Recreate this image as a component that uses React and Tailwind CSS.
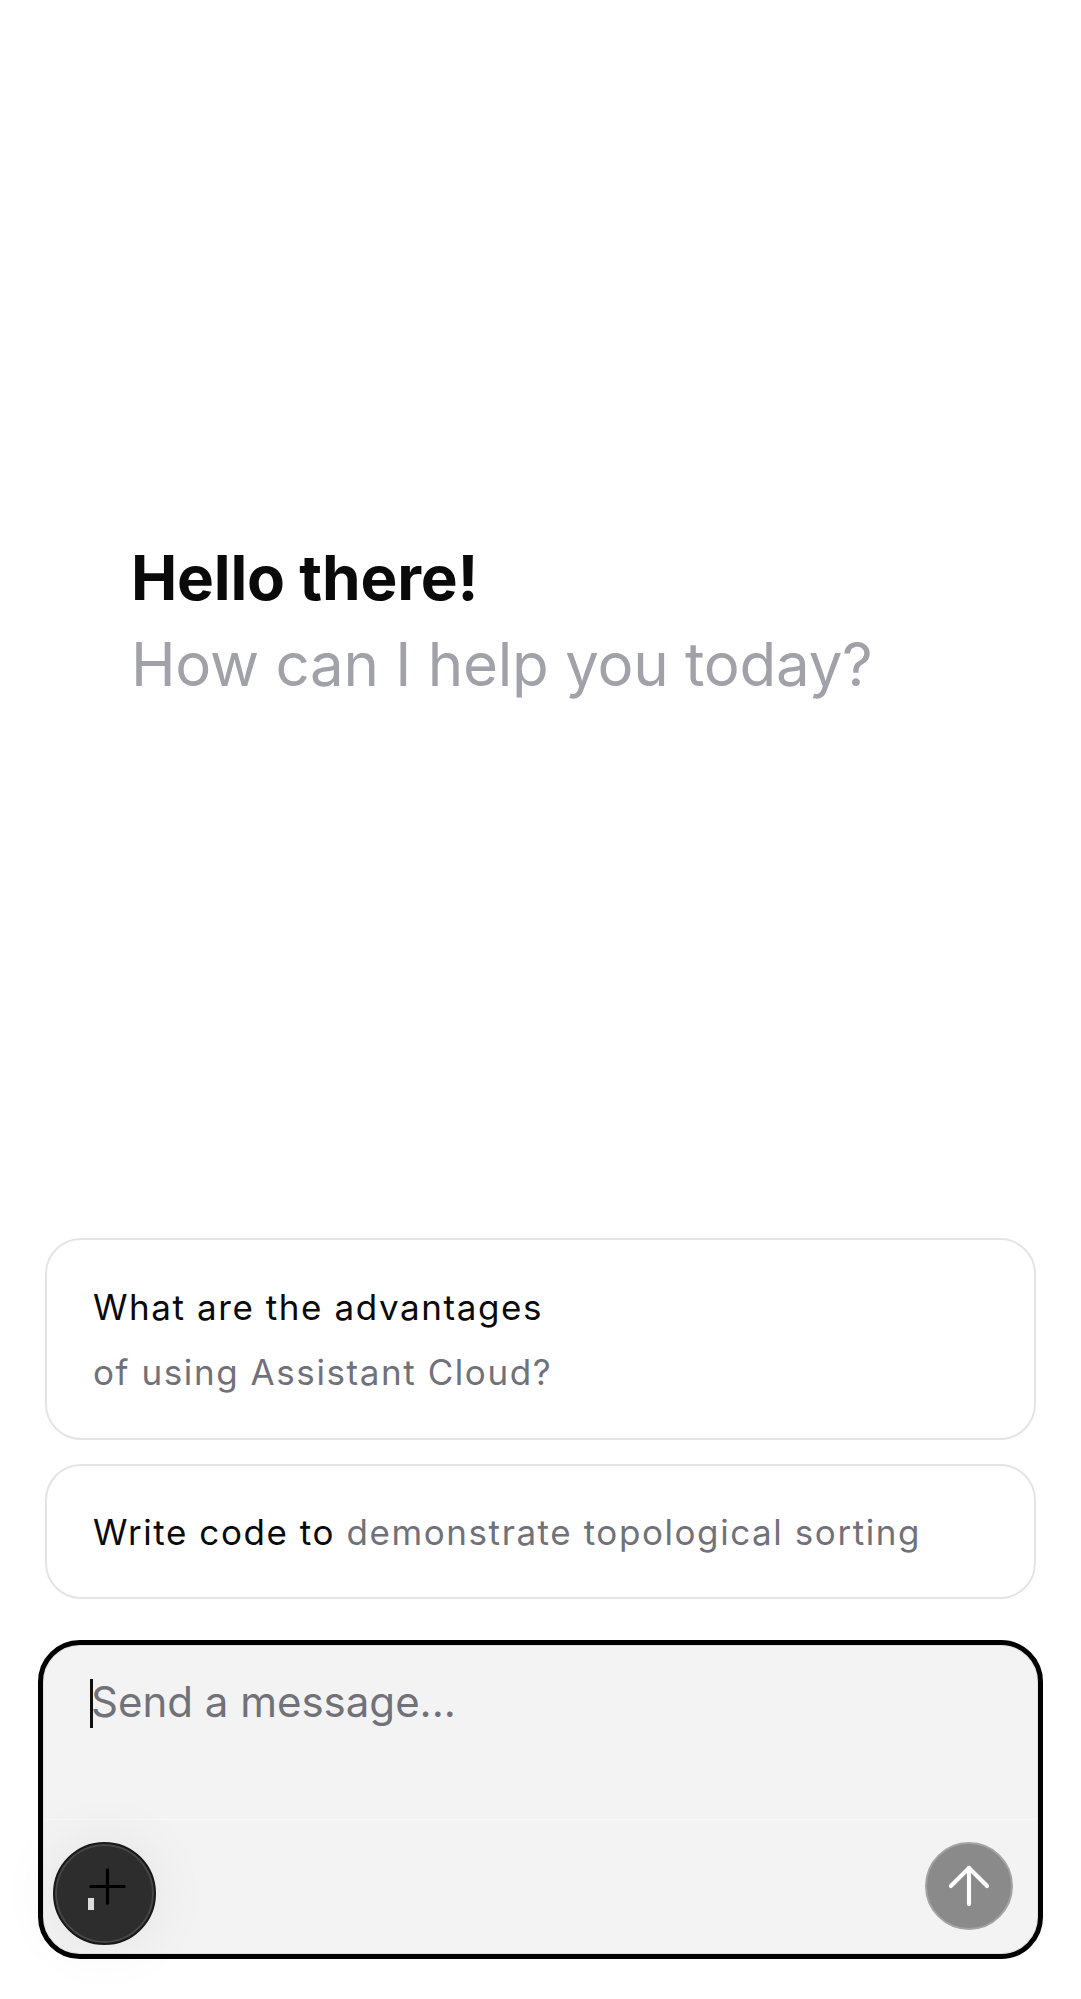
export default function App() {
  return (
    <div
      className="flex h-[1999px] w-full flex-col bg-white"
      style={{ fontFamily: "Inter, 'Noto Sans', sans-serif" }}
    >
      <div className="pl-[131px] pt-[535px]">
        <div className="text-[62px] leading-[86px] font-bold tracking-[-0.2px] text-[#0a0a0a]">
          Hello there!
        </div>
        <div className="text-[60px] leading-[86px] font-normal tracking-[-0.25px] text-[#a1a1aa]">
          How can I help you today?
        </div>
      </div>
      <div className="flex-1" />
      <div className="mx-[45px] flex flex-col gap-[24px]">
        <div className="flex h-[202px] flex-col justify-center gap-[19px] rounded-[36px] border-2 border-[#e4e4e7] px-[46px]">
          <div className="text-[35px] leading-[46px] font-normal tracking-[0.045em] text-[#0a0a0a]">
            What are the advantages
          </div>
          <div className="text-[35px] leading-[46px] tracking-[0.045em] text-[#71717a]">
            of using Assistant Cloud?
          </div>
        </div>
        <div className="flex h-[135px] items-center rounded-[36px] border-2 border-[#e4e4e7] px-[46px]">
          <div className="text-[35px] leading-[46px] tracking-[0.045em]">
            <span className="text-[#0a0a0a]">Write code to </span>
            <span className="text-[#71717a]">demonstrate topological sorting</span>
          </div>
        </div>
      </div>
      <div className="mx-[38px] mb-[40px] mt-[41px] flex h-[319px] flex-col overflow-visible rounded-[42px] border-[5px] border-black bg-[#f3f3f3] shadow-[inset_0_0_0_1px_#e2e2e2]">
        <div className="flex h-[174px] items-start pl-[47px] pt-[25px]">
          <div className="flex items-center">
            <span className="mt-[2px] h-[49px] w-[3px] bg-[#111]" />
            <span className="-ml-[2px] text-[42px] leading-[64px] text-[#71717a]">
              Send a message...
            </span>
          </div>
        </div>
        <div className="mx-[2px] h-px bg-[#f8f8f8]" />
        <div className="flex flex-1 items-start justify-between pl-[10px] pr-[25px] pt-[22px]">
          <div className="relative flex h-[103px] w-[103px] items-center justify-center rounded-full border-2 border-[#181818] bg-[#2d2d2d] shadow-[inset_0_0_0_2px_#464646,0_0_60px_rgba(0,0,0,0.07)]">
            <svg width="57" height="57" viewBox="0 0 24 24" fill="none" stroke="#000" strokeWidth="1.35" strokeLinecap="round" className="-mt-[15px] ml-[6px]">
              <path d="M5 12h14" />
              <path d="M12 5v14" />
            </svg>
            <span className="absolute left-[33px] top-[54px] h-[12px] w-[6px] bg-[#dcdcdc]" />
          </div>
          <div className="flex h-[88px] w-[88px] items-center justify-center rounded-full border-2 border-[#a3a3a3] bg-[#8a8a8a]">
            <svg width="62" height="62" viewBox="0 0 24 24" fill="none" stroke="#fff" strokeWidth="1.6" strokeLinecap="round" strokeLinejoin="round">
              <path d="m5 12 7-7 7 7" />
              <path d="M12 19V5" />
            </svg>
          </div>
        </div>
      </div>
    </div>
  );
}
